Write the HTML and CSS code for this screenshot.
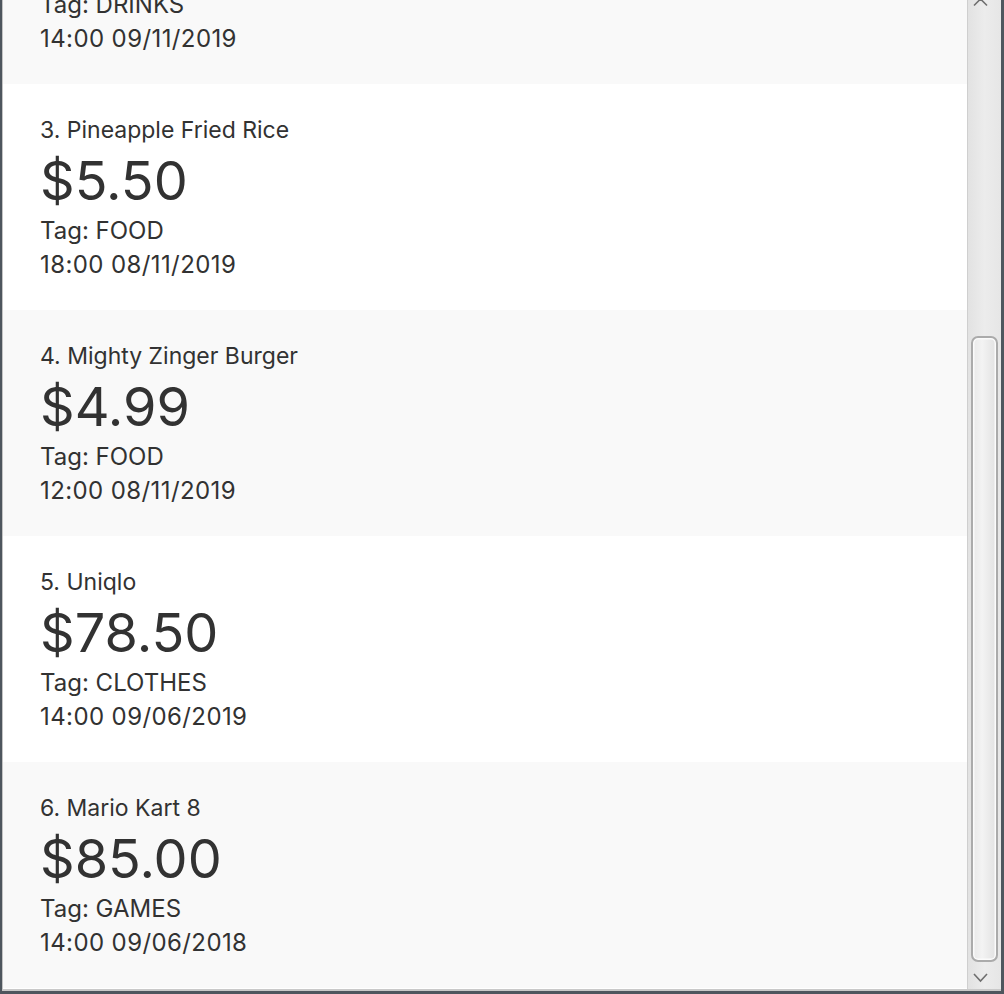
FILE: index.html
```html
<!DOCTYPE html>
<html>
<head>
<meta charset="utf-8">
<link rel="stylesheet" href="styles.css">
</head>
<body>
<div class="window">
  <div class="listview">
    <div class="viewport">
      <div class="cells">
        <div class="cell odd">
          <div class="title">2. Bubble Tea</div>
          <div class="price">$3.50</div>
          <div class="line">Tag: DRINKS</div>
          <div class="line date">14:00 09/11/2019</div>
        </div>
        <div class="cell">
          <div class="title">3. Pineapple Fried Rice</div>
          <div class="price">$5.50</div>
          <div class="line">Tag: FOOD</div>
          <div class="line date">18:00 08/11/2019</div>
        </div>
        <div class="cell odd">
          <div class="title">4. Mighty Zinger Burger</div>
          <div class="price">$4.99</div>
          <div class="line">Tag: FOOD</div>
          <div class="line date">12:00 08/11/2019</div>
        </div>
        <div class="cell">
          <div class="title">5. Uniqlo</div>
          <div class="price">$78.50</div>
          <div class="line">Tag: CLOTHES</div>
          <div class="line date">14:00 09/06/2019</div>
        </div>
        <div class="cell odd">
          <div class="title">6. Mario Kart 8</div>
          <div class="price">$85.00</div>
          <div class="line">Tag: GAMES</div>
          <div class="line date">14:00 09/06/2018</div>
        </div>
      </div>
    </div>
    <div class="scrollbar">
      <div class="btn up">
        <svg width="33" height="8" viewBox="0 0 33 8"><polyline points="6,5.5 12.5,-1 19,5.5" fill="none" stroke="#6f6f6f" stroke-width="1.6"/></svg>
      </div>
      <div class="track">
        <div class="thumb"></div>
      </div>
      <div class="btn down">
        <svg width="33" height="27" viewBox="0 0 33 27"><polyline points="6,12 12.5,19 19,12" fill="none" stroke="#6f6f6f" stroke-width="1.6"/></svg>
      </div>
    </div>
  </div>
</div>
</body>
</html>
```
FILE: styles.css
```css
html, body {
  margin: 0;
  padding: 0;
}
body {
  width: 1004px;
  height: 994px;
  overflow: hidden;
  background: #4e565e;
  font-family: Inter, "Noto Sans", sans-serif;
  color: #323232;
}
.window {
  box-sizing: border-box;
  width: 1004px;
  height: 994px;
  padding: 0 3px 3px 2px;
  display: flex;
}
.listview {
  flex: 1;
  display: flex;
  border-left: 1px solid #c4c4c4;
  border-bottom: 2px solid #c9c9c9;
  background: #ffffff;
  min-height: 0;
}
.viewport {
  flex: 1;
  overflow: hidden;
}
.cells {
  margin-top: -142px;
}
.cell {
  box-sizing: border-box;
  height: 226px;
  padding: 29px 0 0 37px;
  background: #ffffff;
}
.cell.odd {
  background: #f9f9f9;
}
.title {
  font-size: 23px;
  line-height: 34px;
  height: 34px;
  white-space: nowrap;
}
.line {
  font-size: 24px;
  line-height: 34px;
  height: 34px;
  white-space: nowrap;
}
.date {
  letter-spacing: 0.4px;
}
.price {
  font-size: 54px;
  line-height: 67px;
  height: 67px;
  white-space: nowrap;
}
.scrollbar {
  width: 33px;
  display: flex;
  flex-direction: column;
  border-left: 1px solid #cfcfcf;
  background: linear-gradient(to right, #e2e2e2, #ececec 50%, #e6e6e6);
}
.btn {
  flex: none;
  display: flex;
}
.btn.up {
  height: 8px;
}
.btn.down {
  height: 27px;
}
.track {
  flex: 1;
  display: flex;
  flex-direction: column;
  padding: 328px 3px 0 3px;
}
.thumb {
  flex: 1;
  box-sizing: border-box;
  border: 2px solid #ababab;
  border-radius: 7px;
  box-shadow: inset 0 0 0 1.5px #fbfbfb;
  background: linear-gradient(to right, #e9e9e9, #f3f3f3 40%, #e2e2e2);
}
```
